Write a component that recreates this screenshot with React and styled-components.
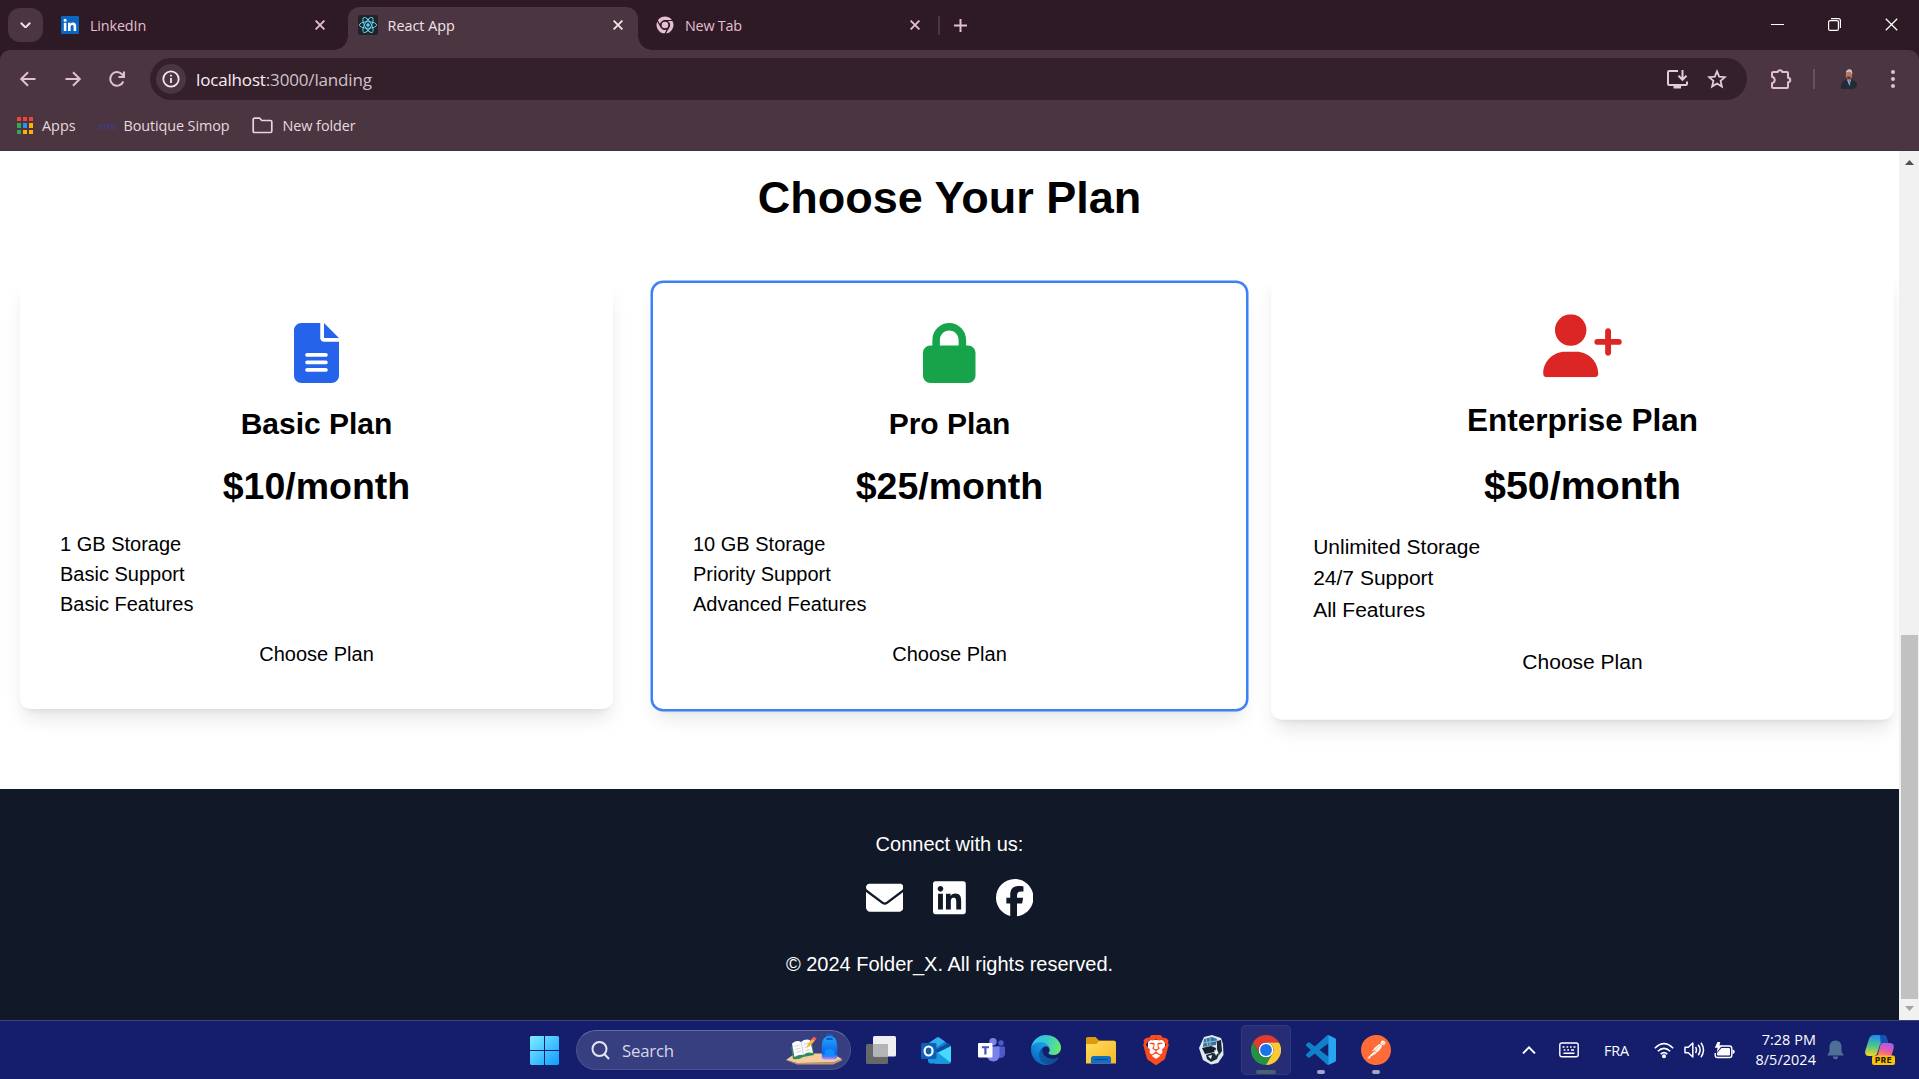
import React from "react";
import styled, { createGlobalStyle, css } from "styled-components";
import { FaFileLines, FaLock, FaUserPlus, FaEnvelope, FaLinkedin, FaFacebook } from "react-icons/fa6";
import { SiBrave, SiPostman } from "react-icons/si";

const UI_FONT = `"Open Sans", "Noto Sans", sans-serif`;
const PAGE_FONT = `"Liberation Sans", Arial, sans-serif`;
const C = {
  strip: "#2e1a25",
  bar: "#4b3541",
  field: "#34202b",
  pink: "#e3bfd2",
  text: "#e6d9df",
};

const GlobalStyle = createGlobalStyle`
  *, *::before, *::after { box-sizing: border-box; }
  html, body { margin: 0; padding: 0; overflow: hidden; background: #fff; }
  svg { display: block; flex: none; }
  h2, h3, p, ul { margin: 0; padding: 0; }
  button { border: 0; background: none; padding: 0; font: inherit; color: inherit; }
`;

const Screen = styled.div`
  width: 1919px;
  height: 1079px;
  display: flex;
  flex-direction: column;
  overflow: hidden;
`;

/* ---------- tab strip ---------- */

const TabStrip = styled.div`
  height: 50px;
  flex: none;
  display: flex;
  padding-left: 8px;
  background: ${C.strip};
  font-family: ${UI_FONT};
  font-size: 14.4px;
  color: ${C.pink};
`;

const TabSearch = styled.button`
  width: 35px;
  height: 34px;
  margin-top: 8px;
  border-radius: 12px;
  background: ${C.bar};
  display: grid;
  place-items: center;
`;

const Tab = styled.div`
  position: relative;
  height: ${(p) => (p.$active ? 43 : 36)}px;
  margin-top: 7px;
  width: ${(p) => p.$width}px;
  padding: 0 ${(p) => p.$right}px ${(p) => (p.$active ? 7 : 0)}px ${(p) => p.$left}px;
  display: flex;
  align-items: center;
  ${(p) =>
    p.$active &&
    css`
      background: ${C.bar};
      color: #f0e4ea;
      border-radius: 12px 12px 0 0;
      &::before,
      &::after {
        content: "";
        position: absolute;
        bottom: 0;
        width: 14px;
        height: 14px;
      }
      &::before {
        left: -14px;
        background: radial-gradient(circle at 0 0, transparent 13.5px, ${C.bar} 14px);
      }
      &::after {
        right: -14px;
        background: radial-gradient(circle at 100% 0, transparent 13.5px, ${C.bar} 14px);
      }
    `}
`;

const TabTitle = styled.span`
  margin-left: ${(p) => p.$gap}px;
  flex: 1;
  white-space: nowrap;
  letter-spacing: ${(p) => p.$track || 0}px;
`;

const TabDivider = styled.span`
  width: 2px;
  height: 19px;
  margin: 16px 14px 0 18px;
  background: ${C.bar};
`;

const NewTabButton = styled.button`
  height: 36px;
  margin-top: 7px;
  display: grid;
  place-items: center;
`;

const WindowControls = styled.div`
  margin-left: auto;
  margin-right: 21px;
  height: 49px;
  display: flex;
  align-items: center;
  gap: 44px;
`;

/* ---------- toolbar ---------- */

const Toolbar = styled.div`
  height: 58px;
  flex: none;
  padding: 8px 22px 8px 18px;
  display: flex;
  align-items: center;
  background: ${C.bar};
  border-radius: 10px 10px 0 0;
  font-family: ${UI_FONT};
`;

const ToolbarBack = styled.div`
  background: ${C.strip};
`;

const NavIcons = styled.div`
  width: 132px;
  display: flex;
  gap: 24.5px;
`;

const AddressBar = styled.div`
  width: 1597px;
  height: 42px;
  border-radius: 21px;
  background: ${C.field};
  display: flex;
  align-items: center;
  padding: 0 20px 0 6px;
`;

const InfoBadge = styled.span`
  width: 30px;
  height: 30px;
  border-radius: 50%;
  background: ${C.bar};
  display: grid;
  place-items: center;
`;

const Url = styled.span`
  flex: 1;
  margin-left: 10px;
  font-size: 17px;
  letter-spacing: -0.16px;
  color: #cfc2c8;
  b {
    font-weight: 400;
    color: #fbeef4;
  }
`;

const FieldIcons = styled.span`
  display: flex;
  gap: 19px;
`;

const ToolbarEnd = styled.div`
  flex: 1;
  padding-left: 23px;
  display: flex;
  align-items: center;
  > :last-child {
    margin-left: auto;
  }
`;

const ToolbarDivider = styled.span`
  width: 2px;
  height: 20px;
  margin: 0 24px 0 21px;
  background: #6b5060;
`;

const Bookmarks = styled.div`
  height: 43px;
  flex: none;
  padding: 0 0 7px 17px;
  display: flex;
  align-items: center;
  background: ${C.bar};
  border-bottom: 1px solid #43303b;
  font-family: ${UI_FONT};
  font-size: 14.4px;
  color: ${C.text};
`;

const Bookmark = styled.span`
  display: flex;
  align-items: center;
  gap: ${(p) => p.$gap}px;
  width: ${(p) => p.$width}px;
  letter-spacing: ${(p) => p.$track || 0}px;
  white-space: nowrap;
`;

const AppsGrid = styled.span`
  display: grid;
  grid-template-columns: repeat(3, 4px);
  grid-auto-rows: 4.5px;
  gap: 2px;
`;

const Dot = styled.i`
  background: ${(p) => p.$color};
`;

const SiteMark = styled.span`
  width: 16px;
  font: 8.5px ${UI_FONT};
  letter-spacing: -1.5px;
  color: #3a3f8c;
`;

/* ---------- page ---------- */

const Viewport = styled.div`
  height: 869px;
  flex: none;
  display: flex;
`;

const Page = styled.main`
  width: 1899px;
  display: flex;
  flex-direction: column;
  overflow: hidden;
  background: #fff;
  color: #000;
  font-family: ${PAGE_FONT};
  font-size: 20px;
  line-height: 30px;
`;

const Plans = styled.section`
  height: 638px;
  padding: 22px 20px 0;
`;

const Title = styled.h2`
  font-size: 45px;
  line-height: 50px;
  text-align: center;
  margin-bottom: 60px;
`;

const CardGrid = styled.div`
  display: grid;
  grid-template-columns: repeat(3, 1fr);
  gap: 40px;
`;

const Card = styled.article`
  height: 426px;
  padding: 40px;
  border-radius: 10px;
  background: #fff;
  display: flex;
  flex-direction: column;
  align-items: center;
  box-shadow: ${(p) => (p.$ring ? "0 0 0 2.5px #3b82f6, " : "")}0 12.5px 18.75px -3.75px rgba(0, 0, 0, 0.1),
    0 5px 7.5px -5px rgba(0, 0, 0, 0.1);
  transform: ${(p) => (p.$raised ? "scale(1.05)" : "none")};
`;

const CardIcon = styled.div`
  color: ${(p) => p.$color};
  margin-bottom: 21px;
  svg {
    width: ${(p) => p.$width}px;
    height: 60px;
  }
`;

const PlanName = styled.h3`
  font-size: 30px;
  line-height: 40px;
  margin-bottom: 20px;
`;

const Price = styled.p`
  font-size: 37.5px;
  line-height: 45px;
  font-weight: 700;
  margin-bottom: 20px;
`;

const Features = styled.ul`
  align-self: stretch;
  list-style: none;
  margin-bottom: 20px;
`;

const Footer = styled.footer`
  flex: 1;
  padding-top: 40px;
  background: #111827;
  color: #fff;
  display: flex;
  flex-direction: column;
  align-items: center;
`;

const Socials = styled.div`
  margin: 20px 0 32.5px;
  display: flex;
  gap: 30px;
  font-size: 37.5px;
`;

const SocialSlot = styled.span`
  display: flex;
  svg {
    width: ${(p) => p.$width}px;
    height: 37.5px;
  }
`;

const Scrollbar = styled.div`
  width: 20px;
  padding: 9px 1px 9px 2px;
  background: #f1f1f1;
  display: flex;
  flex-direction: column;
  align-items: center;
`;

const ScrollThumb = styled.div`
  width: 17px;
  height: 364px;
  margin: auto 0 7px;
  background: #c1c1c1;
`;

/* ---------- taskbar ---------- */

const Taskbar = styled.div`
  height: 59px;
  flex: none;
  display: flex;
  align-items: center;
  padding: 0 24px 0 530px;
  border-top: 1px solid #3d4274;
  background: #151e6c;
  color: #fff;
  font-family: ${UI_FONT};
`;

const SearchBox = styled.div`
  width: 275px;
  height: 40px;
  margin: 0 5px 0 17px;
  padding: 0 7px 0 14px;
  display: flex;
  align-items: center;
  border-radius: 20px;
  border: 1px solid #4b5190;
  border-top-color: #666b9f;
  background: #373f80;
  color: #d5d7ea;
  font-size: 16.8px;
  letter-spacing: -0.2px;
`;

const SearchLabel = styled.span`
  flex: 1;
  margin-left: 12px;
`;

const AppRow = styled.div`
  display: flex;
  gap: 5px;
`;

const AppSlot = styled.div`
  position: relative;
  width: 50px;
  height: 50px;
  display: grid;
  place-items: center;
  border-radius: 5px;
  ${(p) => p.$active && "background: #262d75; box-shadow: inset 0 0 0 1px #31387c;"}
`;

const Running = styled.span`
  position: absolute;
  bottom: 1px;
  left: 50%;
  transform: translateX(-50%);
  width: ${(p) => (p.$wide ? 20 : 8)}px;
  height: 4px;
  border-radius: 2px;
  background: ${(p) => (p.$wide ? "#46626f" : "#a3a6c9")};
`;

const Layered = styled.span`
  width: ${(p) => p.$size}px;
  height: ${(p) => p.$size}px;
  display: grid;
  place-items: center;
  color: ${(p) => p.$color};
  > * {
    grid-area: 1 / 1;
  }
`;

const Backing = styled.i`
  width: ${(p) => p.$w}px;
  height: ${(p) => p.$h}px;
  border-radius: ${(p) => p.$r};
  background: #fff;
`;

const Tray = styled.div`
  margin-left: auto;
  display: flex;
  align-items: center;
`;

const Language = styled.span`
  width: 26px;
  margin: 0 24px 0 25px;
  font-size: 14.4px;
  letter-spacing: -0.1px;
`;

const TrayIcons = styled.span`
  display: flex;
  align-items: center;
  gap: ${(p) => p.$gap}px;
`;

const Clock = styled.div`
  width: 81px;
  font-size: 14.4px;
  line-height: 20px;
  letter-spacing: 0.08px;
  text-align: right;
  margin-right: 11px;
`;

/* ---------- drawings ---------- */

const Cross = ({ size = 10, w = 1.9, color = "currentColor" }) => (
  <svg width={size} height={size} viewBox="0 0 10 10" stroke={color} strokeWidth={w}>
    <path d="M.6.6 9.4 9.4M9.4.6.6 9.4" />
  </svg>
);

const Chevron = ({ up, width = 14, w = 2, color = "#fff" }) => (
  <svg width={width} height={width * 0.6} viewBox="0 0 14 8.4" fill="none" stroke={color} strokeWidth={w}>
    <path d={up ? "M1 7.4 7 1.4 13 7.4" : "M1 1 7 7 13 1"} />
  </svg>
);

const LinkedInMark = () => (
  <svg width="18" height="18" viewBox="0 0 18 18">
    <rect width="18" height="18" rx="1.2" fill="#0a66c2" />
    <g fill="#fff">
      <circle cx="4.1" cy="4.3" r="1.5" />
      <path d="M2.8 6.8h2.6V15H2.8zM7 6.8h2.5v1.1c.5-.8 1.4-1.3 2.5-1.3 2.6 0 3.2 1.7 3.2 3.9V15h-2.6v-4c0-1-.1-2.1-1.3-2.1-1.4 0-1.7 1-1.7 2.1v4H7z" />
    </g>
  </svg>
);

const ReactMark = () => (
  <svg width="20" height="20" viewBox="0 0 20 20">
    <rect width="20" height="20" rx="2" fill="#20232a" />
    <g fill="none" stroke="#61dafb" strokeWidth="0.9">
      <ellipse cx="10" cy="10" rx="8.6" ry="3.3" />
      <ellipse cx="10" cy="10" rx="8.6" ry="3.3" transform="rotate(60 10 10)" />
      <ellipse cx="10" cy="10" rx="8.6" ry="3.3" transform="rotate(120 10 10)" />
    </g>
    <circle cx="10" cy="10" r="1.7" fill="#61dafb" />
  </svg>
);

const CHROME_TOP = "M24 12H44.781A23.994 23.994 0 0 0 3.217 12.003L13.608 30l.01-.002A11.985 11.985 0 0 1 24 12Z";
const CHROME_RIGHT = "M34.391 30.003 24.001 48A23.994 23.994 0 0 0 44.78 12.003H23.999l-.003.01A11.985 11.985 0 0 1 34.391 30.003Z";
const CHROME_LEFT = "M13.609 30.003 3.218 12.006A23.994 23.994 0 0 0 24.003 48L34.393 30.003l-.007-.007a11.985 11.985 0 0 1-20.778.007Z";

const ChromeMark = ({ size, mono }) => (
  <svg width={size} height={size} viewBox="0 0 48 48">
    {!mono && <circle cx="24" cy="24" r="12" fill="#fff" />}
    <g stroke={mono ? C.strip : "none"} strokeWidth="3">
      <path d={CHROME_TOP} fill={mono ? C.pink : "#e33b2e"} />
      <path d={CHROME_LEFT} fill={mono ? C.pink : "#229342"} />
      <path d={CHROME_RIGHT} fill={mono ? C.pink : "#fcc934"} />
    </g>
    <circle cx="24" cy="24" r={mono ? 8.8 : 9.5} fill={mono ? C.pink : "#1a73e8"} />
  </svg>
);

const Arrow = ({ flip }) => (
  <svg width="20" height="20" viewBox="0 0 20 20" fill="none" stroke={C.pink} strokeWidth="2">
    <path d={flip ? "M2.5 10H16.5M10 3.2 16.8 10 10 16.8" : "M17.5 10H3.5M10 3.2 3.2 10 10 16.8"} />
  </svg>
);

const Reload = () => (
  <svg width="20" height="20" viewBox="0 0 20 20" fill="none" stroke={C.pink} strokeWidth="2">
    <path d="M16.3 12.5A6.8 6.8 0 1 1 15 5.3L16.8 7.2" />
    <path d="M17 2.5V8H11.5" />
  </svg>
);

const Info = () => (
  <svg width="18" height="18" viewBox="0 0 18 18" fill="none" stroke="#f2e6ec" strokeWidth="1.8">
    <circle cx="9" cy="9" r="7.7" />
    <path d="M9 8v5M9 4.8v1.8" />
  </svg>
);

const Install = () => (
  <svg width="22" height="20" viewBox="0 0 22 20" fill="none" stroke="#e0cdd7" strokeWidth="2">
    <path d="M12 2H3.2Q2 2 2 3.2V14.8Q2 16 3.2 16H19.8Q21 16 21 14.8V12.5M16.5 1V10.5M12.5 6.8 16.5 10.8 20.5 6.8" />
    <path d="M7.5 18h7.5" strokeWidth="3" />
  </svg>
);

const Star = () => (
  <svg width="20" height="20" viewBox="0 0 20 20" fill="none" stroke="#e0cdd7" strokeWidth="1.8">
    <path d="M10 2.4 12.2 7.7 17.9 8.2 13.6 11.9 14.9 17.5 10 14.5 5.1 17.5 6.4 11.9 2.1 8.2 7.8 7.7Z" />
  </svg>
);

const Puzzle = () => (
  <svg width="22" height="22" viewBox="0 0 22 22" fill="none" stroke={C.pink} strokeWidth="2" strokeLinejoin="round">
    <path d="M3.2 4H7.800Q8 2.200 10 2.200T12.200 4H17Q18 4 18 5V9.700Q20.300 10 20.300 12T18 14.300V19Q18 20 17 20H3.200Q2 20 2 19V15.200Q4.700 14.500 4.700 12T2 8.800V5Q2 4 3.200 4Z" />
  </svg>
);

const Avatar = () => (
  <svg width="20" height="22" viewBox="0 0 20 22">
    <path d="M2 21Q1 13 7 11.500H12.500Q18 13 18 17 17.500 20 14 21Z" fill="#222b36" />
    <path d="M8 11.500h4L10.500 18Z" fill="#b9c6ea" />
    <path d="M9.500 12h1L10.700 17Z" fill="#26427b" />
    <ellipse cx="10" cy="6.500" rx="3.200" ry="4.700" fill="#b87862" />
    <path d="M6.800 4.500Q8 1 11 1.300 13.500 2 13.300 6 12 3.500 10 3.500Z" fill="#d5c5bd" />
    <path d="M8 8.500h3.500v2.500H8.500Z" fill="#5f352e" />
  </svg>
);

const Kebab = () => (
  <svg width="8" height="20" viewBox="0 0 8 20" fill={C.pink}>
    <circle cx="4" cy="3" r="2" />
    <circle cx="4" cy="10" r="2" />
    <circle cx="4" cy="17" r="2" />
  </svg>
);

const FolderOutline = () => (
  <svg width="21" height="17" viewBox="0 0 21 17" fill="none" stroke="#e6d5de" strokeWidth="1.7" strokeLinejoin="round">
    <path d="M1.2 2.5Q1.2 1.2 2.5 1.2H7.8L9.8 3.5H18.5Q19.8 3.5 19.8 4.8V14.2Q19.8 15.5 18.5 15.5H2.5Q1.2 15.5 1.2 14.2Z" />
  </svg>
);

const Caret = ({ down }) => (
  <svg width="9" height="5" viewBox="0 0 9 5" fill={down ? "#a3a3a3" : "#505050"}>
    <path d={down ? "M0 0h9L4.500 5Z" : "M0 5h9L4.500 0Z"} />
  </svg>
);

const StartMark = () => (
  <svg width="29" height="29" viewBox="0 0 29 29">
    <defs>
      <linearGradient id="start" gradientUnits="userSpaceOnUse" x1="0" y1="0" x2="29" y2="29">
        <stop offset="0" stopColor="#7eeeff" />
        <stop offset="1" stopColor="#0f9bff" />
      </linearGradient>
    </defs>
    <path fill="url(#start)" d="M1 0H14V14H0V1ZM15 0H28L29 1V14H15ZM0 15H14V29H1L0 28ZM15 15H29V28L28 29H15Z" />
  </svg>
);

const Magnifier = () => (
  <svg width="19" height="19" viewBox="0 0 19 19" fill="none" stroke="#e4e6f2" strokeWidth="2">
    <circle cx="8.5" cy="8" r="7" />
    <path d="M13.3 13 18 18" />
  </svg>
);

const SchoolArt = () => (
  <svg width="58" height="32" viewBox="0 0 58 32">
    <defs>
      <linearGradient id="bag" x1="0" y1="0" x2="0" y2="1">
        <stop offset="0" stopColor="#22a8ff" />
        <stop offset="0.75" stopColor="#0566e8" />
        <stop offset="1" stopColor="#b78cff" />
      </linearGradient>
    </defs>
    <path d="M1 26 10 19.500H47L57 25 48 28.500 12 29Z" fill="#f3cda0" />
    <path d="M1 26 12 29 48 28.500 57 25V26.500L48 30.500H12Z" fill="#c4976a" />
    <path d="M6 13 8 25Q14 26 18 23L29 21 27 8Z" fill="#2f8b57" />
    <path d="M7 9.500Q12 5.500 16 8 20 4.500 25 6L28 19Q22 17.500 18.500 21 14.500 20 9.500 23Z" fill="#fbfbfe" />
    <path d="M16.300 8 18.500 21M9.500 12.500l5-1.500M10.500 15.500l5-1.500M11.500 18.500l4.500-1.500M19 10l4-1M19.500 13.500l5-1.500M20.500 16.500l4.500-1" stroke="#c3c7d3" strokeWidth="0.8" fill="none" />
    <path d="M21.500 14 23 9.500 27.500 4.500 30 6.500 25.500 11.500Z" fill="#ffb532" />
    <path d="M26.800 4.800 28.800 2.500 31.500 4.500 29.700 7Z" fill="#ff5a58" />
    <path d="M42 3V1.500Q42 .5 44.500 .5T47 1.500V3" fill="none" stroke="#0a66d8" strokeWidth="1.5" />
    <path d="M36.800 12Q37 2 44.500 2T52.200 12V23Q52 25.500 49.500 25.500H39.500Q37 25.500 36.800 23Z" fill="url(#bag)" />
    <path d="M39.500 19Q39.500 15 44.500 15T49.500 19V22.500H39.500Z" fill="#148bff" />
    <path d="M41 4.500Q44.500 2.500 48 4.500L47.500 6H41.500Z" fill="#0759c9" />
  </svg>
);

const TaskViewMark = () => (
  <svg width="30" height="28" viewBox="0 0 30 28">
    <rect x="0" y="8" width="22" height="20" rx="1.5" fill="#666769" />
    <rect x="7" y="0" width="23" height="20.5" rx="1.5" fill="#efeff1" />
    <path d="M7 8H22V20.500H8.500Q7 20.500 7 19Z" fill="#b3b4b7" />
  </svg>
);

const OutlookMark = () => (
  <svg width="30" height="27" viewBox="0 0 30 27">
    <path d="M5 8 16 .5Q17 0 18 .5L30 9 14 17Z" fill="#1382d8" />
    <path d="M8 6 16 .5Q17 0 18 .5L24 4.500 13 12Z" fill="#35aef0" />
    <path d="M14 13 27 6 30 9 14 19Z" fill="#0b4c9f" />
    <path d="M14 17 30 9V23.500Q30 26.500 27 26.500H14Z" fill="#47d9fb" />
    <path d="M7 21 16 15 30 26Q29 26.500 27 26.500H10Q7 26.500 7 23.500Z" fill="#1799e0" />
    <rect y="6" width="15.5" height="16" rx="1.5" fill="#0f5fb8" />
    <ellipse cx="7.6" cy="14" rx="4" ry="4.5" fill="none" stroke="#fff" strokeWidth="2.2" />
  </svg>
);

const TeamsMark = () => (
  <svg width="27" height="24" viewBox="0 0 27 24">
    <circle cx="23" cy="5" r="2.7" fill="#5059c9" />
    <path d="M18 8.500H27V16Q26.500 20 22 20H18Z" fill="#5059c9" />
    <circle cx="15" cy="3.7" r="3.7" fill="#7b83eb" />
    <path d="M9 8.500H21.500V17Q21 23.500 15.300 23.500T9 17Z" fill="#7b83eb" />
    <rect y="5" width="14.5" height="14.5" rx="1" fill="#fff" />
    <path d="M3.800 8.200H11V10.200H8.500V16.500H6.300V10.200H3.800Z" fill="#4b53bc" />
  </svg>
);

const EdgeMark = () => (
  <svg width="30" height="30" viewBox="0 0 256 256">
    <defs>
      <linearGradient id="edgeA" x1="0.2" y1="0.5" x2="1" y2="0.5">
        <stop offset="0" stopColor="#0c59a4" />
        <stop offset="1" stopColor="#114a8b" />
      </linearGradient>
      <linearGradient id="edgeB" x1="0.8" y1="0.2" x2="0.3" y2="1">
        <stop offset="0" stopColor="#1b9de2" />
        <stop offset="0.5" stopColor="#1184d8" />
        <stop offset="1" stopColor="#0a5fb5" />
      </linearGradient>
      <linearGradient id="edgeC" x1="0" y1="0.4" x2="1" y2="0.6">
        <stop offset="0" stopColor="#35c1f1" />
        <stop offset="0.45" stopColor="#36c8cf" />
        <stop offset="1" stopColor="#66eb6e" />
      </linearGradient>
    </defs>
    <g transform="translate(-4.63 -4.92)">
      <path fill="url(#edgeA)" d="M235.68 195.46a93.73 93.73 0 0 1-10.54 4.71 101.87 101.87 0 0 1-35.9 6.46c-47.32 0-88.54-32.55-88.54-74.32A31.48 31.48 0 0 1 117.13 105c-42.8 1.8-53.8 46.4-53.8 72.53 0 73.88 68.09 81.37 82.76 81.37 7.91 0 19.84-2.3 27-4.56l1.31-.44a128.34 128.34 0 0 0 66.6-52.8 4 4 0 0 0-5.32-5.64z" />
      <path fill="url(#edgeB)" d="M110.34 246.34A79.2 79.2 0 0 1 87.6 225a80.72 80.72 0 0 1 29.53-120c3.12-1.47 8.45-4.13 15.54-4a32.35 32.35 0 0 1 25.69 13 31.88 31.88 0 0 1 6.36 18.66c0-.21 24.46-79.6-80-79.6-43.9 0-80 41.66-80 78.21a130.15 130.15 0 0 0 12.11 56 128 128 0 0 0 156.38 67.11 75.55 75.55 0 0 1-62.78-8z" />
      <path fill="url(#edgeC)" d="M156.94 153.78c-.81 1.05-3.3 2.5-3.3 5.66 0 2.61 1.7 5.12 4.72 7.23 14.38 10 41.49 8.68 41.56 8.68a59.56 59.56 0 0 0 30.27-8.35 61.38 61.38 0 0 0 30.43-52.88c.26-22.41-8-37.31-11.34-43.91C228.09 28.76 182.35 5 132.61 5a128 128 0 0 0-128 126.2c.48-36.54 36.8-66.05 80-66.05 3.5 0 23.46.34 42 10.07 16.34 8.58 24.9 18.94 30.85 29.21 6.18 10.67 7.28 24.15 7.28 29.52s-2.74 13.33-7.8 19.83z" />
    </g>
  </svg>
);

const ExplorerMark = () => (
  <svg width="30" height="27" viewBox="0 0 30 27">
    <defs>
      <linearGradient id="folder" x1="0" y1="0" x2="1" y2="1">
        <stop offset="0" stopColor="#ffdc62" />
        <stop offset="1" stopColor="#f8b81f" />
      </linearGradient>
    </defs>
    <path d="M0 1.500Q0 0 1.500 0H9.500L13 3.500H28.500V9H0Z" fill="#dd9a0c" />
    <path d="M0 7Q6 7 10.500 7L13 4H28.500Q30 4 30 5.500V26.500H0Z" fill="url(#folder)" />
    <path d="M5 26.500V21.500Q5 19 7.500 19H22.500Q25 19 25 21.500V26.500Z" fill="#0f70c5" />
    <path d="M8.500 22.500H21.500" stroke="#0a4c92" strokeWidth="1.3" />
  </svg>
);

const ShieldMark = () => (
  <svg width="25" height="30" viewBox="0 0 25 30">
    <path d="M5 2 13 0 22 3 24 9 24.500 20 19 28 12 29.500 4 25 0 13Z" fill="#dfe9ef" />
    <path d="M5 4 13 2 18 4 17 10 4 12Z" fill="#39749f" />
    <path d="M7 3.500 9 11M11 3v8M4 8 17 6" stroke="#8fc0dc" strokeWidth="1" />
    <path d="M3 13 12 11 17 13 16 17 6 19Z" fill="#11202c" />
    <path d="M18 6 22 5 23 16 20 20 18 14Z" fill="#1a2833" />
    <path d="M7 20 13 18 20 19 18 24 12 27 8 24Z" fill="#1c2c38" />
    <path d="M9 21 13 20 12 24ZM15 15 19 17 17 21Z" fill="#fff" />
  </svg>
);

const CodeMark = () => (
  <svg width="30" height="30" viewBox="0 0 24 24">
    <path
      fill="#1080cb"
      d="M23.15 2.587 18.21.21a1.494 1.494 0 0 0-1.705.29l-9.46 8.63-4.12-3.128a.999.999 0 0 0-1.276.057L.327 7.261A1 1 0 0 0 .326 8.74L3.899 12 .326 15.26a1 1 0 0 0 .001 1.479L1.65 17.94a.999.999 0 0 0 1.276.057l4.12-3.128 9.46 8.63a1.492 1.492 0 0 0 1.704.29l4.942-2.377A1.5 1.5 0 0 0 24 20.06V3.939a1.5 1.5 0 0 0-.85-1.352zm-5.146 14.861L10.826 12l7.178-5.448v10.896z"
    />
    <path fill="#27a5f3" d="M18 .15 23.15 2.587A1.5 1.5 0 0 1 24 3.94V20.06A1.5 1.5 0 0 1 23.15 21.41L18 23.85Z" />
  </svg>
);

const Keyboard = () => (
  <svg width="20" height="16" viewBox="0 0 20 16" fill="none" stroke="#fff" strokeWidth="1.4">
    <rect x=".8" y="1" width="18.4" height="13.8" rx="2" />
    <path d="M3.5 5h2M7.5 5h1.7M11 5h1.7M14.5 5h2M4.7 8h1.7M8.300 8h1.700M12 8h3M4.500 11.300h11" />
  </svg>
);

const Wifi = () => (
  <svg width="20" height="17" viewBox="0 0 20 17" fill="none" stroke="#fff" strokeWidth="1.6">
    <path d="M.8 6.200Q10-2.800 19.200 6.200M3.800 9.300Q10 3.300 16.200 9.300M6.700 12.200Q10 9.200 13.300 12.200" />
    <circle cx="10" cy="14.3" r="1.2" fill="#fff" />
  </svg>
);

const Speaker = () => (
  <svg width="21" height="18" viewBox="0 0 21 18" fill="none" stroke="#fff" strokeWidth="1.5" strokeLinejoin="round">
    <path d="M1 6.200H4.300L8.800 2V16L4.300 11.800H1ZM11.500 6Q13.500 9 11.500 12M14.200 3.800Q18 9 14.200 14.200M17 1.800Q22 9 17 16.200" />
  </svg>
);

const Battery = () => (
  <svg width="21" height="17" viewBox="0 0 21 17">
    <path d="M6.500 4H15.500Q17.800 4 17.800 6.200V13.200Q17.800 15.500 15.500 15.500H3.500Q1.200 15.500 1.200 13.200V11" fill="none" stroke="#fff" strokeWidth="1.4" />
    <path d="M7.500 6H15Q16 6 16 7V12.500Q16 13.600 15 13.600H4Q3 13.600 3 12.500V11Z" fill="#fff" />
    <path d="M3.500 0H6.200L5.500 3.500H8L2.800 10.300 3.600 5.800H.8Z" fill="#fff" />
    <path d="M18.500 7.500Q20.800 8 20.800 9.700T18.500 12Z" fill="#fff" />
  </svg>
);

const Bell = () => (
  <svg width="17" height="20" viewBox="0 0 17 20" fill="#4f6f96">
    <path d="M8.500.5Q14.500.8 14.500 7V11.500L16.800 15.500H.2L2.500 11.500V7Q2.500.8 8.500.5ZM5.800 16.500H11.200Q10.800 19.300 8.500 19.300T5.800 16.500Z" />
  </svg>
);

const Copilot = () => (
  <svg width="30" height="30" viewBox="0 0 30 30">
    <defs>
      <linearGradient id="copA" x1="0.3" y1="0" x2="0.2" y2="1">
        <stop offset="0" stopColor="#1e8df2" />
        <stop offset="0.5" stopColor="#4ac58c" />
        <stop offset="1" stopColor="#f5d72b" />
      </linearGradient>
      <linearGradient id="copB" x1="0.8" y1="0" x2="0.3" y2="1">
        <stop offset="0" stopColor="#a35bf0" />
        <stop offset="0.55" stopColor="#ee5c9f" />
        <stop offset="1" stopColor="#ff9a4a" />
      </linearGradient>
    </defs>
    <path d="M9 0H18Q21 0 22 4L23 8H18Q15.500 8 14.500 11L12 19Q11 21 8 21H4Q-1 21 .5 15L4 4Q5.500 0 9 0Z" fill="url(#copA)" />
    <path d="M15 0H18Q21 0 22 4L23 8H18Q16.500 8 15.800 9Z" fill="#164fb5" />
    <path d="M18 8H25Q30 8 28.500 14L26 22H8Q12 22 13 19L15 11Q16 8 18 8Z" fill="url(#copB)" />
    <rect x="7" y="20.5" width="23" height="9.5" rx="2" fill="#ffc400" />
    <text x="18.6" y="28.2" textAnchor="middle" fontFamily="Inter, sans-serif" fontWeight="800" fontSize="8" letterSpacing="0.6" fill="#1a1a1a">
      PRE
    </text>
  </svg>
);

/* ---------- data ---------- */

const PLANS = [
  { name: "Basic Plan", price: "$10/month", icon: FaFileLines, iconWidth: 45, color: "#2563eb", features: ["1 GB Storage", "Basic Support", "Basic Features"] },
  { name: "Pro Plan", price: "$25/month", icon: FaLock, iconWidth: 52.5, color: "#16a34a", ring: true, features: ["10 GB Storage", "Priority Support", "Advanced Features"] },
  { name: "Enterprise Plan", price: "$50/month", icon: FaUserPlus, iconWidth: 75, color: "#dc2626", raised: true, features: ["Unlimited Storage", "24/7 Support", "All Features"] },
];

const APP_DOTS = ["#f44336", "#f44336", "#f44336", "#34a853", "#2196f3", "#ffb300", "#34a853", "#ffb300", "#ffb300"];

const APPS = [
  { id: "view", art: <TaskViewMark /> },
  { id: "outlook", art: <OutlookMark /> },
  { id: "teams", art: <TeamsMark /> },
  { id: "edge", art: <EdgeMark /> },
  { id: "files", art: <ExplorerMark /> },
  { id: "brave", art: <Layered $size={30} $color="#fb4a1d"><Backing $w={17} $h={20} $r="4px 4px 9px 9px" /><SiBrave size={30} /></Layered> },
  { id: "shield", art: <ShieldMark /> },
  { id: "chrome", art: <ChromeMark size={30} />, active: true, running: true },
  { id: "code", art: <CodeMark />, running: true },
  { id: "postman", art: <Layered $size={30} $color="#ff6c37"><Backing $w={28} $h={28} $r="50%" /><SiPostman size={30} /></Layered>, running: true },
];

/* ---------- sections ---------- */

const BrowserTabs = () => (
  <TabStrip>
    <TabSearch><Chevron width={11} w={2.6} color="#f0dbe6" /></TabSearch>
    <Tab $width={305} $left={18} $right={23}>
      <LinkedInMark />
      <TabTitle $gap={11} $track={-0.15}>LinkedIn</TabTitle>
      <Cross />
    </Tab>
    <Tab $active $width={290} $left={10} $right={15}>
      <ReactMark />
      <TabTitle $gap={9.5}>React App</TabTitle>
      <Cross />
    </Tab>
    <Tab $width={282} $left={18} $right={0}>
      <ChromeMark size={18} mono />
      <TabTitle $gap={11} $track={-0.25}>New Tab</TabTitle>
      <Cross />
    </Tab>
    <TabDivider />
    <NewTabButton>
      <svg width="13" height="13" viewBox="0 0 13 13" stroke={C.pink} strokeWidth="2"><path d="M6.5 0V13M0 6.5H13" /></svg>
    </NewTabButton>
    <WindowControls>
      <svg width="13" height="13" viewBox="0 0 13 13"><path d="M0 6h13v1H0z" fill="#fff" /></svg>
      <svg width="13" height="13" viewBox="0 0 13 13" fill="none" stroke="#fff" strokeWidth="1.2">
        <rect x=".6" y="2.6" width="9.8" height="9.8" rx="1.5" />
        <path d="M3 .6H10.400Q12.400.6 12.400 2.600V10" />
      </svg>
      <Cross size={13} w={0.95} color="#fff" />
    </WindowControls>
  </TabStrip>
);

const BrowserToolbar = () => (
  <ToolbarBack>
    <Toolbar>
      <NavIcons><Arrow /><Arrow flip /><Reload /></NavIcons>
      <AddressBar>
        <InfoBadge><Info /></InfoBadge>
        <Url><b>localhost</b>:3000/landing</Url>
        <FieldIcons><Install /><Star /></FieldIcons>
      </AddressBar>
      <ToolbarEnd>
        <Puzzle />
        <ToolbarDivider />
        <Avatar />
        <Kebab />
      </ToolbarEnd>
    </Toolbar>
    <Bookmarks>
      <Bookmark $gap={9} $width={81}>
        <AppsGrid>{APP_DOTS.map((c, i) => <Dot key={i} $color={c} />)}</AppsGrid>
        Apps
      </Bookmark>
      <Bookmark $gap={9.5} $width={154} $track={-0.1}><SiteMark>simop</SiteMark>Boutique Simop</Bookmark>
      <Bookmark $gap={9.5} $width={120} $track={-0.05}><FolderOutline />New folder</Bookmark>
    </Bookmarks>
  </ToolbarBack>
);

const PlanCard = ({ plan }) => {
  const Icon = plan.icon;
  return (
    <Card $ring={plan.ring} $raised={plan.raised}>
      <CardIcon $color={plan.color} $width={plan.iconWidth}><Icon /></CardIcon>
      <PlanName>{plan.name}</PlanName>
      <Price>{plan.price}</Price>
      <Features>{plan.features.map((f) => <li key={f}>{f}</li>)}</Features>
      <button>Choose Plan</button>
    </Card>
  );
};

const LandingPage = () => (
  <Page>
    <Plans>
      <Title>Choose Your Plan</Title>
      <CardGrid>{PLANS.map((p) => <PlanCard key={p.name} plan={p} />)}</CardGrid>
    </Plans>
    <Footer>
      <p>Connect with us:</p>
      <Socials>
        <SocialSlot $width={37.5}><FaEnvelope /></SocialSlot>
        <SocialSlot $width={32.8}><FaLinkedin /></SocialSlot>
        <SocialSlot $width={37.5}><FaFacebook /></SocialSlot>
      </Socials>
      <p>© 2024 Folder_X. All rights reserved.</p>
    </Footer>
  </Page>
);

const WindowsTaskbar = () => (
  <Taskbar>
    <StartMark />
    <SearchBox><Magnifier /><SearchLabel>Search</SearchLabel><SchoolArt /></SearchBox>
    <AppRow>
      {APPS.map((a) => (
        <AppSlot key={a.id} $active={a.active}>
          {a.art}
          {a.running && <Running $wide={a.active} />}
        </AppSlot>
      ))}
    </AppRow>
    <Tray>
      <TrayIcons $gap={23}><Chevron up /><Keyboard /></TrayIcons>
      <Language>FRA</Language>
      <TrayIcons $gap={9.5}><Wifi /><Speaker /><Battery /></TrayIcons>
      <Clock>7:28 PM<br />8/5/2024</Clock>
      <TrayIcons $gap={21}><Bell /><Copilot /></TrayIcons>
    </Tray>
  </Taskbar>
);

export default function App() {
  return (
    <>
      <GlobalStyle />
      <Screen>
        <BrowserTabs />
        <BrowserToolbar />
        <Viewport>
          <LandingPage />
          <Scrollbar><Caret /><ScrollThumb /><Caret down /></Scrollbar>
        </Viewport>
        <WindowsTaskbar />
      </Screen>
    </>
  );
}
